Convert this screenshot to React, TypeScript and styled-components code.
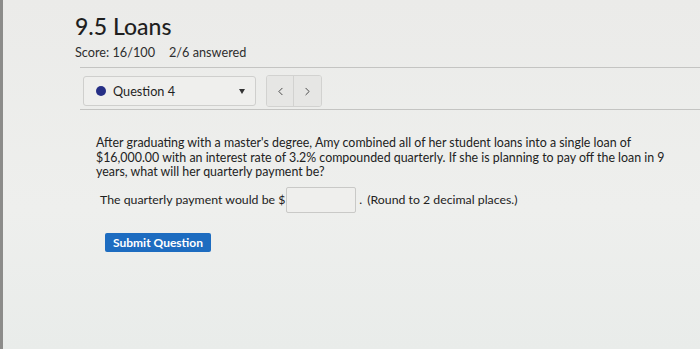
import React from "react";
import styled, { createGlobalStyle } from "styled-components";
import { ChevronLeft, ChevronRight } from "lucide-react";

const GlobalStyle = createGlobalStyle`
  html, body {
    margin: 0;
    padding: 0;
    background: #ecedeb;
  }
  body {
    font-family: Lato, "Open Sans", sans-serif;
    color: #2e2e2e;
  }
`;

const Page = styled.div`
  height: 349px;
  box-sizing: border-box;
  border-left: 3px solid #8c8c8a;
  background: linear-gradient(180deg, #ebebe9 0%, #eeefed 60%, #e9ecea 100%);
  padding-top: 12px;
  overflow: hidden;
`;

const Header = styled.div`
  padding-left: 72px;
`;

const Title = styled.h1`
  margin: 0;
  font-size: 23px;
  font-weight: 500;
  line-height: 28px;
  color: #1f1f1f;
`;

const Score = styled.div`
  display: flex;
  gap: 14px;
  margin-top: 4px;
  font-size: 12.7px;
  color: #2e2e2e;
`;

const QuestionBar = styled.div`
  margin-left: 77px;
  margin-top: 7px;
  border-top: 1px solid #c4c4c2;
  border-bottom: 1px solid #c4c4c2;
  padding: 7px 0 2px 3px;
  display: flex;
  align-items: center;
  gap: 10px;
`;

const Select = styled.div`
  width: 173px;
  height: 30px;
  box-sizing: border-box;
  border: 1px solid #cfcfcd;
  border-radius: 3px;
  background: #efefed;
  display: flex;
  align-items: center;
  padding: 0 10px 0 12px;
  font-size: 12.7px;
  color: #1f1f1f;
`;

const Dot = styled.span`
  width: 10px;
  height: 10px;
  border-radius: 50%;
  background: #262f86;
  margin-right: 7px;
`;

const Caret = styled.span`
  margin-left: auto;
  width: 0;
  height: 0;
  border-left: 3.5px solid transparent;
  border-right: 3.5px solid transparent;
  border-top: 5px solid #333;
`;

const NavGroup = styled.div`
  display: flex;
  height: 30px;
  border: 1px solid #d2d2d0;
  border-radius: 3px;
  overflow: hidden;
`;

const NavButton = styled.button<{ $divider?: boolean }>`
  width: 27px;
  height: 100%;
  border: none;
  border-right: ${(p) => (p.$divider ? "1px solid #d2d2d0" : "none")};
  background: #e6e6e4;
  color: #333;
  padding: 0;
  display: flex;
  align-items: center;
  justify-content: center;
`;

const Content = styled.div`
  padding-left: 93px;
  padding-top: 26px;
`;

const Paragraph = styled.p`
  margin: 0;
  width: 580px;
  font-size: 12.4px;
  line-height: 14.5px;
  color: #222;
`;

const AnswerRow = styled.div`
  display: flex;
  align-items: center;
  margin-top: 7px;
  padding-left: 4px;
  font-size: 12.3px;
  color: #222;
`;

const AnswerInput = styled.span`
  width: 70px;
  height: 26px;
  box-sizing: border-box;
  border: 1px solid #c9c9c7;
  border-radius: 2px;
  background: #efefed;
  margin: 0 3px 0 1px;
`;

const Hint = styled.span`
  margin-left: 5px;
`;

const SubmitButton = styled.button`
  margin-top: 20px;
  margin-left: 9px;
  width: 106px;
  height: 19px;
  border: none;
  border-radius: 2px;
  background: #1d6cc0;
  color: #fff;
  font-family: Lato, sans-serif;
  font-weight: 700;
  font-size: 12px;
  padding: 0;
`;

export default function App() {
  return (
    <>
      <GlobalStyle />
      <Page>
        <Header>
          <Title>9.5 Loans</Title>
          <Score>
            <span>Score: 16/100</span>
            <span>2/6 answered</span>
          </Score>
        </Header>
        <QuestionBar>
          <Select>
            <Dot />
            Question 4
            <Caret />
          </Select>
          <NavGroup>
            <NavButton $divider aria-label="Previous question">
              <ChevronLeft size={13} strokeWidth={1.6} />
            </NavButton>
            <NavButton aria-label="Next question">
              <ChevronRight size={13} strokeWidth={1.6} />
            </NavButton>
          </NavGroup>
        </QuestionBar>
        <Content>
          <Paragraph>
            After graduating with a master's degree, Amy combined all of her student loans into a
            single loan of $16,000.00 with an interest rate of 3.2% compounded quarterly. If she is
            planning to pay off the loan in 9 years, what will her quarterly payment be?
          </Paragraph>
          <AnswerRow>
            The quarterly payment would be $<AnswerInput />.<Hint>(Round to 2 decimal places.)</Hint>
          </AnswerRow>
          <SubmitButton>Submit Question</SubmitButton>
        </Content>
      </Page>
    </>
  );
}
